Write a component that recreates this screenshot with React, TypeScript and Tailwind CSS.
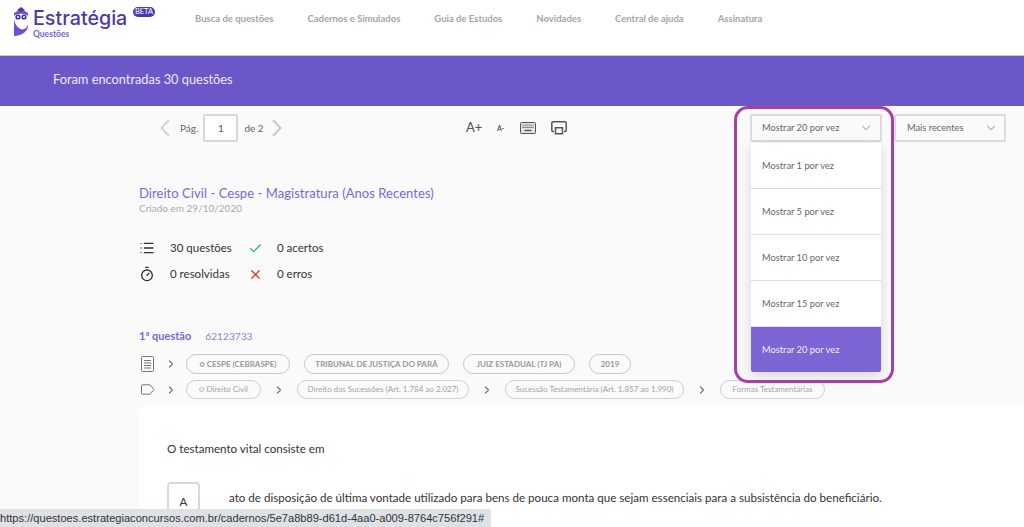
import { ChevronDown, ChevronRight, Check, List, Timer, X } from 'lucide-react';

const NAV = ['Busca de questões', 'Cadernos e Simulados', 'Guia de Estudos', 'Novidades', 'Central de ajuda', 'Assinatura'];
const OPTIONS = ['Mostrar 1 por vez', 'Mostrar 5 por vez', 'Mostrar 10 por vez', 'Mostrar 15 por vez'];
const BOARD_TAGS = [
  { label: '○ CESPE (CEBRASPE)', className: 'w-[104px]' },
  { label: 'TRIBUNAL DE JUSTIÇA DO PARÁ', className: 'w-[145px]' },
  { label: 'JUIZ ESTADUAL (TJ PA)', className: 'w-[112px]' },
  { label: '2019', className: 'w-[42px]' },
];
const SUBJECT_TAGS = [
  { label: '○ Direito Civil', className: 'w-[75px]' },
  { label: 'Direito das Sucessões (Art. 1.784 ao 2.027)', className: 'w-[172px]' },
  { label: 'Sucessão Testamentária (Art. 1.857 ao 1.990)', className: 'w-[179px]' },
  { label: 'Formas Testamentárias', className: 'w-[105px]' },
];

function Owl() {
  return (
    <svg width="16" height="31" viewBox="0 0 16 31">
      <path d="M1 7 L8 3 L15 7 L15 19 C15 26 8 30 1 30 Z" fill="#6f4fd8" />
      <path d="M4 4 L8 1 L12 4 L8 6 Z" fill="#4b3aa8" />
      <path d="M1 10 C4 7 12 7 15 10 L15 18 C14 23 9 25 6 22 C3 20 1 16 1 10 Z" fill="#ffffff" />
      <circle cx="5" cy="11" r="2.6" fill="#3f3290" />
      <circle cx="11" cy="11" r="2.6" fill="#3f3290" />
      <circle cx="5" cy="11" r="1" fill="#ffffff" />
      <circle cx="11" cy="11" r="1" fill="#ffffff" />
    </svg>
  );
}

function KeyboardIcon() {
  return (
    <svg width="16" height="12" viewBox="0 0 16 12">
      <rect x="0.5" y="0.5" width="15" height="11" rx="1" fill="#e4e4e4" stroke="#555" />
      <path d="M2.5 3h11M2.5 5.3h11" stroke="#555" strokeWidth="1.2" strokeDasharray="1.2 .8" />
      <path d="M4.5 8.5h7" stroke="#555" strokeWidth="1.4" />
    </svg>
  );
}

function PrintIcon() {
  return (
    <svg width="16" height="14" viewBox="0 0 16 14" fill="none" stroke="#555" strokeWidth="1.5">
      <path d="M3 10.5H2a1.2 1.2 0 0 1-1.2-1.2V2A1.2 1.2 0 0 1 2 .8h12A1.2 1.2 0 0 1 15.200 2v7.300a1.200 1.200 0 0 1-1.200 1.200h-1" />
      <path d="M4.500 6.800h7v6h-7z" />
    </svg>
  );
}

function DocIcon() {
  return (
    <svg width="13" height="16" viewBox="0 0 13 16" fill="none" stroke="#777" strokeWidth="1">
      <rect x="0.5" y="0.500" width="12" height="15" rx="1" />
      <path d="M3 4.500h7M3 7h7M3 9.500h7M3 12h7" />
    </svg>
  );
}

function TagIcon() {
  return (
    <svg width="14" height="11" viewBox="0 0 14 11" fill="none" stroke="#777" strokeWidth="1">
      <path d="M1.500 .8h7.500l4 4.700-4 4.700H1.500a1 1 0 0 1-1-1V1.800a1 1 0 0 1 1-1z" />
    </svg>
  );
}

function PageArrow({ flip, color }: { flip?: boolean; color: string }) {
  return (
    <svg width="10" height="18" viewBox="0 0 10 18" fill="none" stroke={color} strokeWidth="2">
      <path d={flip ? 'M9 1 L1.500 9 L9 17' : 'M1 1 L8.500 9 L1 17'} />
    </svg>
  );
}

function Arrow() {
  return <ChevronRight className="w-[12px] h-[12px] text-[#777] shrink-0" strokeWidth={2.5} />;
}

export default function App() {
  return (
    <div className="relative h-[527px] w-[1024px] overflow-hidden bg-[#fafafa] font-['Lato','Noto_Sans',sans-serif]">
      {/* Header */}
      <header className="h-[56px] bg-white border-b border-[#c9bfeb] flex items-start">
        <div className="relative w-[195px] shrink-0 flex items-start pl-[13px] pt-[6px] gap-[4px]">
          <Owl />
          <div className="flex flex-col">
            <span className="text-[19.700px] leading-[24px] font-medium text-[#4b3aa8] font-['Inter',sans-serif]">Estratégia</span>
            <span className="text-[8.500px] leading-[8px] font-bold text-[#7a5fd8]">Questões</span>
          </div>
          <span className="absolute left-[133px] top-[7px] h-[10px] w-[22px] rounded-full bg-[#4b3aa8] text-white text-[7.500px] leading-[10px] text-center">BETA</span>
        </div>
        <nav className="flex gap-[34px] pt-[13px]">
          {NAV.map((item) => (
            <span key={item} className="text-[9.500px] leading-[12px] font-bold text-[#a5a5a5] whitespace-nowrap">
              {item}
            </span>
          ))}
        </nav>
      </header>

      {/* Banner */}
      <div className="h-[50px] bg-[#6c57c9] flex items-center pl-[53px] pb-[2px] text-[12.800px] text-[#ece9f9]">
        Foram encontradas 30 questões
      </div>

      {/* Toolbar */}
      <div className="h-[44px] flex items-center relative">
        <div className="flex items-center pl-[160px] w-[462px] shrink-0 text-[10px] text-[#666]">
          <PageArrow flip color="#d4d4d4" />
          <span className="ml-[10px]">Pág.</span>
          <div className="ml-[5px] w-[35px] h-[28px] bg-white border-2 border-[#d8d8d8] rounded-[2px] flex items-center justify-center text-[#555]">1</div>
          <span className="ml-[6px]">de 2</span>
          <span className="ml-[8px]"><PageArrow color="#c8c8c8" /></span>
        </div>
        <div className="flex items-center w-[288px] shrink-0 pl-[4px] text-[#555]">
          <span className="text-[13px] w-[31px] font-medium">A+</span>
          <span className="text-[7px] w-[23px] font-bold">A-</span>
          <span className="w-[31px]"><KeyboardIcon /></span>
          <PrintIcon />
        </div>
        <div className="w-[132px] h-[28px] shrink-0 border-2 border-[#dcdcdc] rounded-[2px] flex items-center justify-between pl-[10px] pr-[7px] text-[9.300px] text-[#666]">
          Mostrar 20 por vez
          <ChevronDown className="w-[14px] h-[14px] text-[#bbb]" />
        </div>
        <div className="ml-[12px] w-[112px] h-[28px] shrink-0 border-2 border-[#dcdcdc] rounded-[2px] flex items-center justify-between pl-[11px] pr-[6px] text-[9.300px] text-[#666]">
          Mais recentes
          <ChevronDown className="w-[14px] h-[14px] text-[#bbb]" />
        </div>
      </div>

      {/* Notebook summary */}
      <section className="pl-[139px] pt-[35px]">
        <h1 className="text-[13px] leading-[16px] text-[#7a68d8] tracking-[0.05px]">Direito Civil - Cespe - Magistratura (Anos Recentes)</h1>
        <p className="mt-[1px] text-[10px] leading-[13px] text-[#aaa]">Criado em 29/10/2020</p>
        <div className="mt-[20px] grid grid-cols-[31px_78px_29px_100px] grid-rows-[26px_26px] items-center text-[11.500px] text-[#333] w-max">
          <List className="w-[16px] h-[16px] text-[#333]" />
          <span>30 questões</span>
          <Check className="w-[15px] h-[15px] text-[#22c55e]" />
          <span>0 acertos</span>
          <Timer className="w-[16px] h-[16px] text-[#333]" />
          <span>0 resolvidas</span>
          <X className="w-[15px] h-[15px] text-[#d93636]" />
          <span>0 erros</span>
        </div>
      </section>

      {/* Question meta */}
      <section className="pl-[139px] pt-[42px]">
        <div className="flex gap-[14px] text-[11px] leading-[14px] text-[#7a68d8]">
          <span className="font-bold">1ª questão</span>
          <span className="text-[10.200px] text-[#8f80e0]">62123733</span>
        </div>
        <div className="mt-[11px] flex items-center h-[20px]">
          <span className="w-[26px] pl-[2px]"><DocIcon /></span>
          <Arrow />
          <div className="ml-[9px] flex gap-[14px]">
            {BOARD_TAGS.map((tag) => (
              <span key={tag.label} className={`h-[20px] rounded-full border border-[#c8c8c8] text-[8px] leading-[18px] text-center font-bold text-[#999] whitespace-nowrap ${tag.className}`}>
                {tag.label}
              </span>
            ))}
          </div>
        </div>
        <div className="mt-[6px] flex items-center h-[19px]">
          <span className="w-[26px] pl-[2px]"><TagIcon /></span>
          <Arrow />
          <div className="ml-[9px] flex items-center gap-[12px]">
            {SUBJECT_TAGS.map((tag, i) => (
              <div key={tag.label} className="flex items-center gap-[12px]">
                {i > 0 && <Arrow />}
                <span className={`h-[19px] rounded-full border border-[#d0d0d0] text-[8px] leading-[17px] text-center text-[#a5a5a5] whitespace-nowrap ${tag.className}`}>
                  {tag.label}
                </span>
              </div>
            ))}
          </div>
        </div>
      </section>

      {/* Question card */}
      <section className="ml-[139px] mt-[8px] h-[130px] bg-white rounded-tl-[4px] pl-[28px] pt-[35px] text-[11.600px] text-[#333]">
        <p className="leading-[14px]">O testamento vital consiste em</p>
        <div className="mt-[26px] flex items-center gap-[29px]">
          <div className="w-[33px] h-[40px] border-2 border-[#d8d8d8] rounded-[4px] flex items-center justify-center self-start">A</div>
          <p className="self-start pt-[7px] whitespace-nowrap">ato de disposição de última vontade utilizado para bens de pouca monta que sejam essenciais para a subsistência do beneficiário.</p>
        </div>
      </section>

      {/* Open select menu */}
      <ul className="absolute left-[751px] top-[143px] w-[130px] shadow-[0_4px_14px_rgba(0,0,0,0.14)] rounded-b-[2px] overflow-hidden text-[9.300px]">
        {OPTIONS.map((option) => (
          <li key={option} className="h-[46px] bg-white border-b border-[#dedede] pl-[11px] flex items-center text-[#666]">
            {option}
          </li>
        ))}
        <li className="h-[45px] bg-[#7d65d5] pl-[11px] flex items-center text-[#f1eefb]">Mostrar 20 por vez</li>
      </ul>

      {/* Highlight drawn over the screenshot */}
      <div className="absolute left-[734px] top-[106px] w-[160px] h-[277px] border-[3px] border-[#a540a5] rounded-[14px]" />

      {/* Browser status bar */}
      <div className="absolute left-0 bottom-0 w-[491px] h-[18px] bg-[#dee1e6] rounded-tr-[3px] overflow-hidden text-[11.100px] leading-[19px] text-[#333] whitespace-nowrap font-['Liberation_Sans',sans-serif]">
        https://questoes.estrategiaconcursos.com.br/cadernos/5e7a8b89-d61d-4aa0-a009-8764c756f291#
      </div>
    </div>
  );
}
